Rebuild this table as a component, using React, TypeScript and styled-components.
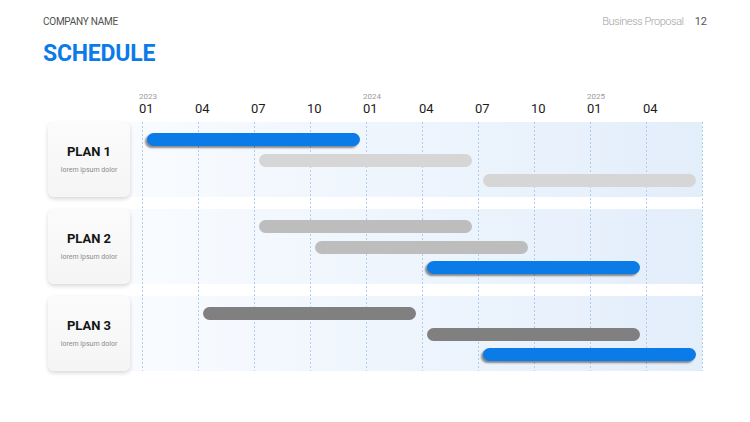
import styled, { createGlobalStyle } from 'styled-components'

const GlobalStyle = createGlobalStyle`
  html, body {
    margin: 0;
    padding: 0;
    background: #ffffff;
  }
  body {
    font-family: Roboto, "Liberation Sans", sans-serif;
  }
`

type Tone = 'blue' | 'light' | 'mid' | 'dark'

interface Task {
  start: number // quarter index, 0 = 2023/01
  tone: Tone
}

interface Plan {
  name: string
  tasks: Task[]
}

const plans: Plan[] = [
  {
    name: 'PLAN 1',
    tasks: [
      { start: 0, tone: 'blue' },
      { start: 2, tone: 'light' },
      { start: 6, tone: 'light' },
    ],
  },
  {
    name: 'PLAN 2',
    tasks: [
      { start: 2, tone: 'mid' },
      { start: 3, tone: 'mid' },
      { start: 5, tone: 'blue' },
    ],
  },
  {
    name: 'PLAN 3',
    tasks: [
      { start: 1, tone: 'dark' },
      { start: 5, tone: 'dark' },
      { start: 6, tone: 'blue' },
    ],
  },
]

const ticks = [
  { year: '2023', month: '01' },
  { month: '04' },
  { month: '07' },
  { month: '10' },
  { year: '2024', month: '01' },
  { month: '04' },
  { month: '07' },
  { month: '10' },
  { year: '2025', month: '01' },
  { month: '04' },
]

const toneColor: Record<Tone, string> = {
  blue: '#0b7be8',
  light: '#d6d6d6',
  mid: '#bdbdbd',
  dark: '#808080',
}

export default function App() {
  return (
    <>
      <GlobalStyle />
      <Slide>
        <TopBar>
          <Company>COMPANY NAME</Company>
          <Meta>
            <span>Business Proposal</span>
            <PageNo>12</PageNo>
          </Meta>
        </TopBar>
        <Title>SCHEDULE</Title>

        <Chart>
          <Axis>
            {ticks.map((t, i) => (
              <Tick key={i}>
                <Year>{t.year || '\u00a0'}</Year>
                <Month>{t.month}</Month>
              </Tick>
            ))}
          </Axis>

          <Body>
            <GridLines>
              {Array.from({ length: 11 }).map((_, i) => (
                <GridLine key={i} />
              ))}
            </GridLines>

            {plans.map((plan) => (
              <Band key={plan.name}>
                <Card>
                  <PlanName>{plan.name}</PlanName>
                  <PlanSub>lorem ipsum dolor</PlanSub>
                </Card>
                <Lanes>
                  {plan.tasks.map((task, i) => (
                    <Bar
                      key={i}
                      $tone={task.tone}
                      style={{ gridColumn: `${task.start + 1} / span 4`, gridRow: i + 1 }}
                    />
                  ))}
                </Lanes>
              </Band>
            ))}
          </Body>
        </Chart>
      </Slide>
    </>
  )
}

const Slide = styled.div`
  width: 750px;
  height: 422px;
  box-sizing: border-box;
  padding: 15px 43px 0 43px;
  background: #ffffff;
  overflow: hidden;
`

const TopBar = styled.div`
  display: flex;
  justify-content: space-between;
  align-items: center;
  font-size: 11px;
  line-height: 13px;
`

const Company = styled.div`
  font-size: 10px;
  letter-spacing: -0.25px;
  color: #4f4f4f;
`

const Meta = styled.div`
  display: flex;
  gap: 11px;
  color: #a3a3a3;
  font-weight: 300;
  letter-spacing: -0.45px;
`

const PageNo = styled.span`
  color: #555555;
  font-weight: 400;
  letter-spacing: 0;
`

const Title = styled.h1`
  margin: 12px 0 0 0;
  font-size: 23px;
  line-height: 28px;
  font-weight: 700;
  color: #0b7be8;
  letter-spacing: -0.2px;
`

const Chart = styled.div`
  margin: 24px 0 0 5px;
  width: 654px;
`

const Axis = styled.div`
  display: grid;
  grid-template-columns: repeat(10, 56px);
  padding-left: 91px;
  margin-bottom: 6px;
`

const Tick = styled.div`
  display: flex;
  flex-direction: column;
`

const Year = styled.span`
  font-size: 8px;
  line-height: 9px;
  color: #9a9a9a;
`

const Month = styled.span`
  font-size: 13px;
  line-height: 15px;
  color: #1c1c1c;
`

const Body = styled.div`
  position: relative;
  display: flex;
  flex-direction: column;
  gap: 12px;
`

const GridLines = styled.div`
  position: absolute;
  top: 0;
  bottom: 0;
  left: 94px;
  width: 561px;
  display: flex;
  justify-content: space-between;
  pointer-events: none;
  z-index: 0;
`

const GridLine = styled.div`
  width: 1px;
  height: 100%;
  background: repeating-linear-gradient(
    to bottom,
    #b2cdec 0 2px,
    transparent 2px 4px
  );
`

const Band = styled.div`
  display: flex;
  gap: 12px;
  height: 75px;
  background: linear-gradient(to right, #fcfdff 0%, #f3f8fe 35%, #e3eefb 100%);
`

const Card = styled.div`
  width: 82px;
  flex: none;
  display: flex;
  flex-direction: column;
  align-items: center;
  justify-content: center;
  gap: 7px;
  border-radius: 6px;
  background: linear-gradient(180deg, #fbfbfb 0%, #f5f5f5 100%);
  box-shadow: 0 2px 4px rgba(0, 0, 0, 0.16);
  position: relative;
  z-index: 1;
`

const PlanName = styled.div`
  font-size: 13px;
  line-height: 15px;
  font-weight: 700;
  color: #151515;
`

const PlanSub = styled.div`
  font-size: 7px;
  line-height: 9px;
  color: #8c8c8c;
`

const Lanes = styled.div`
  display: grid;
  grid-template-columns: repeat(10, 56px);
  grid-template-rows: repeat(3, 13px);
  row-gap: 7.5px;
  padding-top: 11px;
  width: 560px;
`

const Bar = styled.div<{ $tone: Tone }>`
  position: relative;
  z-index: 1;
  margin: 0 6px 0 5px;
  border-radius: 7px;
  background: ${({ $tone }) => toneColor[$tone]};
  box-shadow: ${({ $tone }) =>
    $tone === 'blue' ? '-2px 2px 2px rgba(0, 0, 0, 0.45)' : 'none'};
`
